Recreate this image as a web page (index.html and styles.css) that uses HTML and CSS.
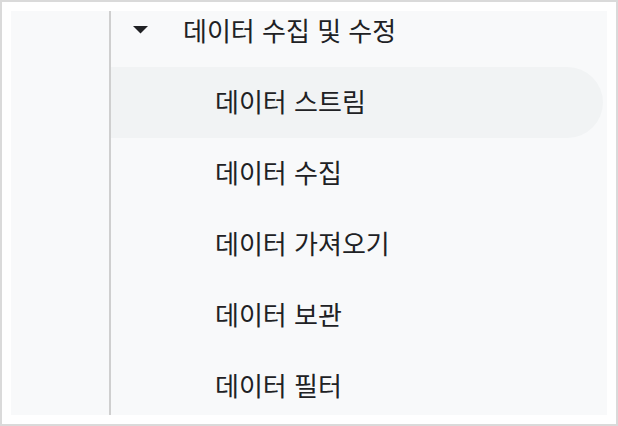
FILE: index.html
```html
<!DOCTYPE html>
<html lang="ko">
<head>
<meta charset="utf-8">
<link rel="stylesheet" href="styles.css">
</head>
<body>
<div class="frame">
  <div class="panel">
    <div class="gutter"></div>
    <div class="tree">
      <ul class="list">
        <li class="row head">
          <svg class="caret" width="15" height="8" viewBox="0 0 15 8"><path d="M0 0 L15 0 L7.5 7.5 Z" fill="#202124"/></svg>
          <span class="label">데이터 수집 및 수정</span>
        </li>
        <li class="row sub active"><span class="label">데이터 스트림</span></li>
        <li class="row sub"><span class="label">데이터 수집</span></li>
        <li class="row sub"><span class="label">데이터 가져오기</span></li>
        <li class="row sub"><span class="label">데이터 보관</span></li>
        <li class="row sub"><span class="label">데이터 필터</span></li>
      </ul>
    </div>
  </div>
</div>
</body>
</html>
```

FILE: styles.css
```css
html, body {
  margin: 0;
  padding: 0;
  background: #ffffff;
}
.frame {
  box-sizing: border-box;
  width: 618px;
  height: 426px;
  border: 2px solid #dadada;
  padding: 9px;
  background: #ffffff;
}
.panel {
  display: flex;
  height: 100%;
  background: #f8f9fa;
  overflow: hidden;
}
.gutter {
  width: 98px;
  flex: none;
  border-right: 2px solid #cfcfcf;
}
.tree {
  flex: 1;
  padding-right: 4px;
}
.list {
  list-style: none;
  margin: -15px 0 0 0;
  padding: 0;
}
.row {
  box-sizing: border-box;
  display: flex;
  align-items: center;
  height: 71px;
  padding-bottom: 4px;
  font-family: "Noto Sans CJK KR", "Noto Sans", sans-serif;
  font-size: 26px;
  color: #202124;
}
.head {
  padding-left: 22px;
}
.caret {
  flex: none;
  margin-right: 35px;
  margin-top: 1px;
}
.sub {
  padding-left: 104px;
}
.active {
  background: #f1f3f4;
  border-radius: 0 36px 36px 0;
}
.label {
  line-height: 1;
  white-space: nowrap;
}
```
